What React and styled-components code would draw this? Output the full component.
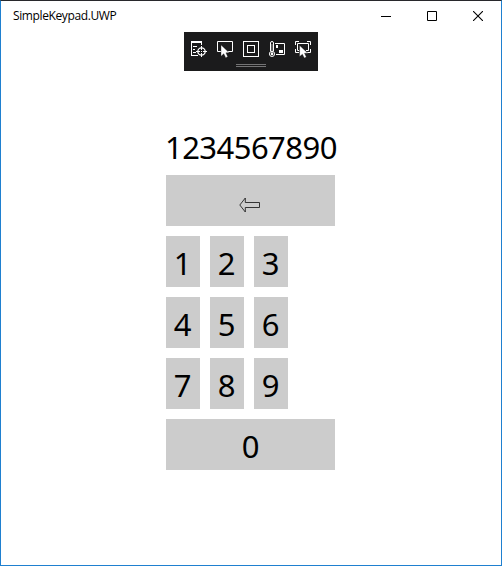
import React from "react";
import styled, { createGlobalStyle } from "styled-components";

const GlobalStyle = createGlobalStyle`
  *, *::before, *::after { box-sizing: border-box; }
  body { margin: 0; background: #fff; overflow: hidden; }
`;

const Window = styled.div`
  display: flex;
  flex-direction: column;
  width: 502px;
  height: 566px;
  background: #fff;
  color: #000;
  border: 1px solid #1f80d0;
  border-top-color: #28282c;
  font-family: "Noto Sans", "Open Sans", sans-serif;
`;

const TitleBar = styled.header`
  display: flex;
  justify-content: space-between;
  height: 31px;
`;

const Title = styled.div`
  padding-left: 12px;
  font-family: "Open Sans", "Noto Sans", sans-serif;
  font-size: 12px;
  line-height: 30px;
  letter-spacing: -0.38px;
  white-space: nowrap;
`;

const Captions = styled.div`
  display: flex;
`;

const CaptionButton = styled.button`
  display: flex;
  align-items: center;
  justify-content: center;
  width: 46px;
  height: 30px;
  padding: 0;
  border: 0;
  background: transparent;
`;

const DebugBar = styled.div`
  display: flex;
  flex-direction: column;
  align-items: center;
  align-self: flex-start;
  width: 134px;
  height: 39px;
  margin-left: 183px;
  padding-top: 9px;
  background: #1b1b1c;
`;

const DebugIcons = styled.div`
  display: flex;
  gap: 10px;
  height: 16px;
`;

const Grip = styled.div`
  width: 30px;
  height: 3px;
  margin-top: 7px;
  border: solid #747475;
  border-width: 1px 0;
`;

const Keypad = styled.main`
  display: flex;
  flex-direction: column;
  gap: 10px;
  width: 169px;
  margin: 54px 0 0 165px;
`;

const Display = styled.div`
  height: 40px;
  margin-left: -1px;
  font-size: 31px;
  line-height: 45px;
  letter-spacing: -0.55px;
  white-space: nowrap;
`;

const KeyRow = styled.div`
  display: flex;
  gap: 10px;
`;

const Key = styled.button`
  width: ${(p) => (p.$wide ? 169 : 34)}px;
  height: 51px;
  display: flex;
  justify-content: center;
  align-items: center;
  padding: ${(p) => p.$pad ?? "3px 1px 0 0"};
  border: 0;
  background: #ccc;
  color: #000;
  font: 400 31px/46px "Noto Sans", "Open Sans", sans-serif;
`;

const IconSvg = styled.svg`
  display: block;
  width: 16px;
  height: 16px;
  overflow: visible;
  fill: none;
  stroke: #fff;
`;

const Icon = ({ children }) => <IconSvg viewBox="0 0 16 16">{children}</IconSvg>;

const Cursor = ({ x, y }) => (
  <path
    transform={`translate(${x} ${y}) scale(1.12)`}
    d="M0 0V10L2.5 7.8L4.2 11.3L6 10.4L4.4 7H7.4Z"
    fill="#fff"
    stroke="#1b1b1c"
    strokeWidth=".3"
  />
);

const VisualTreeIcon = () => (
  <Icon>
    <path d="M0 1H11" strokeWidth="2" />
    <path d="M.5 2V15M10.5 2V4M0 14.5H7M2 5.5H6M2 8.5H4M2 11.5H5" />
    <circle cx="10.5" cy="10.5" r="3.7" strokeWidth="1.3" />
    <path d="M10.5 5V9M10.5 12V16M5 10.5H9M12 10.5H16" />
    <path d="M10 10.5H11" />
  </Icon>
);

const SelectElementIcon = () => (
  <Icon>
    <path d="M4 10.5H.5V.5H15.5V10.5H11" />
    <Cursor x={4} y={4} />
  </Icon>
);

const LayoutIcon = () => (
  <Icon>
    <rect x=".5" y=".5" width="15" height="15" />
    <rect x="4.5" y="4.5" width="7" height="7" />
  </Icon>
);

const PreviewIcon = () => (
  <Icon>
    <path d="M1.5 10V2Q1.5 .5 3 .5T4.5 2V10" />
    <circle cx="3" cy="12.9" r="2.6" />
    <path d="M3 3V12" opacity=".6" />
    <circle cx="3" cy="12.9" r="1.3" fill="#fff" stroke="none" />
    <path d="M6 2.5H15.5V13.5H7" />
    <path d="M7 4H9V7H7ZM10 9H14V12H10Z" fill="#fff" stroke="none" />
  </Icon>
);

const TrackFocusIcon = () => (
  <Icon>
    <path d="M.5 4V.5H4M12 .5H15.5V4M.5 8V11.5H4M12 11.5H15.5V8" />
    <path d="M4 9.5H2.5V2.5H13.5V9.5H11" />
    <Cursor x={4.6} y={4.4} />
  </Icon>
);

const Arrow = () => (
  <svg width="22" height="16" viewBox="0 0 22 16" fill="none" stroke="#222">
    <path d="M.8 8L6.3 1V5.5H20.5V10.5H6.3V15Z" strokeWidth=".9" />
  </svg>
);

const rows = [["1", "2", "3"], ["4", "5", "6"], ["7", "8", "9"]];

export default function App() {
  return (
    <Window>
      <GlobalStyle />
      <TitleBar>
        <Title>SimpleKeypad.UWP</Title>
        <Captions>
          <CaptionButton aria-label="Minimize">
            <svg width="10" height="10"><path d="M0 5.5H10" stroke="#000" /></svg>
          </CaptionButton>
          <CaptionButton aria-label="Maximize">
            <svg width="10" height="10"><path d="M.5 .5H9.5V9.5H.5Z" stroke="#000" fill="none" /></svg>
          </CaptionButton>
          <CaptionButton aria-label="Close">
            <svg width="10" height="10"><path d="M0 0L10 10M10 0L0 10" stroke="#000" strokeWidth="1.1" /></svg>
          </CaptionButton>
        </Captions>
      </TitleBar>
      <DebugBar>
        <DebugIcons>
          <VisualTreeIcon />
          <SelectElementIcon />
          <LayoutIcon />
          <PreviewIcon />
          <TrackFocusIcon />
        </DebugIcons>
        <Grip />
      </DebugBar>
      <Keypad>
        <Display>1234567890</Display>
        <Key $wide $pad="9px 1px 0 0" aria-label="Backspace"><Arrow /></Key>
        {rows.map((row) => (
          <KeyRow key={row[0]}>
            {row.map((n) => <Key key={n}>{n}</Key>)}
          </KeyRow>
        ))}
        <Key $wide $pad="3px 0 0 0">0</Key>
      </Keypad>
    </Window>
  );
}
